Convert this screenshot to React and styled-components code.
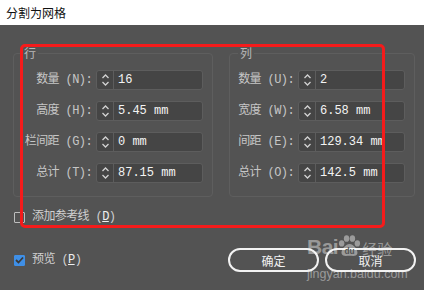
import React from 'react';
import styled, {createGlobalStyle} from 'styled-components';

const GlobalStyle = createGlobalStyle`
  html, body {
    margin: 0;
    padding: 0;
    background: #535353;
  }
  body {
    font-family: "Noto Sans CJK SC", "Liberation Sans", sans-serif;
  }
`;

// SimSun-like look: half-width ascii next to full-width hanzi
const labelFont = `"Liberation Mono", "Noto Sans CJK SC", monospace`;

const Dialog = styled.div`
  position: relative;
  width: 424px;
  height: 290px;
  overflow: hidden;
  display: flex;
  flex-direction: column;
  background: #535353;
`;

const TitleBar = styled.div`
  height: 25px;
  flex: none;
  background: #ffffff;
  color: #111;
  font-size: 12px;
  line-height: 25px;
  padding-left: 6px;
`;

const Body = styled.div`
  flex: 1;
  display: flex;
  flex-direction: column;
  padding: 21px 8px 0 13px;
`;

const Groups = styled.div`
  display: flex;
  gap: 16px;
`;

const Group = styled.fieldset`
  margin: 0;
  padding: 0 9px 13px 0;
  border: 1px solid #5e5e5e;
  border-radius: 4px;
  min-width: 0;
`;

const Legend = styled.legend`
  margin-left: 8px;
  padding: 0 2px;
  font-size: 12px;
  line-height: 14px;
  color: #b8b8b8;
`;

const Rows = styled.div`
  display: grid;
  grid-template-columns: ${p => p.$labelWidth}px 107px;
  column-gap: 4px;
  row-gap: 11px;
  padding-top: 10px;
`;

const Label = styled.label`
  font-family: ${labelFont};
  font-size: 12px;
  letter-spacing: -0.6px;
  line-height: 20px;
  color: #c6c6c6;
  text-align: right;
  white-space: nowrap;
`;

const Field = styled.div`
  display: flex;
  height: 20px;
  box-sizing: border-box;
  border: 1px solid #5d5d5d;
  border-radius: 3px;
  background: #454545;
  overflow: hidden;
`;

const Spinner = styled.div`
  width: 16px;
  flex: none;
  border-right: 1px solid #5d5d5d;
  display: flex;
  align-items: center;
  justify-content: center;
`;

const Value = styled.div`
  flex: 1;
  padding-left: 4px;
  font-family: "Liberation Mono", "DejaVu Sans Mono", monospace;
  font-size: 12px;
  line-height: 18px;
  color: #f4f4f4;
  white-space: nowrap;
`;

const CheckRow = styled.div`
  display: flex;
  align-items: center;
  gap: 7px;
  margin-left: 1px;
  margin-top: ${p => p.$top || 0}px;
  font-family: ${labelFont};
  font-size: 12px;
  letter-spacing: -0.6px;
  line-height: 14px;
  color: #d0d0d0;
`;

const Box = styled.span`
  width: 11px;
  height: 11px;
  box-sizing: border-box;
  border-radius: 1px;
  border: 1px solid ${p => (p.$checked ? '#3f8fe6' : '#bdbdbd')};
  background: ${p => (p.$checked ? '#3f8fe6' : 'transparent')};
  display: flex;
  align-items: center;
  justify-content: center;
`;

const Key = styled.span`
  text-decoration: underline;
  color: #f0f0f0;
`;

const Footer = styled.div`
  display: flex;
  align-items: center;
  justify-content: space-between;
  margin-top: 24px;
`;

const Buttons = styled.div`
  display: flex;
  gap: 6px;
`;

const Button = styled.button`
  width: 91px;
  height: 24px;
  box-sizing: border-box;
  border: 2px solid #f2f2f2;
  border-radius: 12px;
  background: transparent;
  color: #f2f2f2;
  font-family: "Noto Sans CJK SC", sans-serif;
  font-size: 12px;
  padding: 0;
`;

const Highlight = styled.div`
  position: absolute;
  left: 20px;
  top: 44px;
  width: 365px;
  height: 184px;
  box-sizing: border-box;
  border: 3px solid #f51b1b;
  border-radius: 5px;
  pointer-events: none;
`;

const Watermark = styled.div`
  position: absolute;
  left: 307px;
  top: 235px;
  display: flex;
  flex-direction: column;
  color: rgba(255, 255, 255, 0.42);
  pointer-events: none;
`;

const Brand = styled.div`
  display: flex;
  align-items: flex-end;
  height: 22px;
`;

const Bai = styled.span`
  font-family: "Liberation Sans", sans-serif;
  font-weight: bold;
  font-size: 21px;
  line-height: 20px;
  letter-spacing: -0.5px;
`;

const Jy = styled.span`
  font-size: 15px;
  line-height: 17px;
  margin-left: 1px;
`;

const Url = styled.span`
  margin-top: 11px;
  font-family: "Liberation Sans", sans-serif;
  font-size: 12.5px;
  line-height: 13px;
`;

const Chevrons = () => (
  <svg width="9" height="14" viewBox="0 0 9 14" fill="none" stroke="#d2d2d2" strokeWidth="1.3">
    <path d="M1.5 5 L4.5 2 L7.5 5"/>
    <path d="M1.5 9 L4.5 12 L7.5 9"/>
  </svg>
);

const Paw = () => (
  <svg width="23" height="22" viewBox="0 0 22 21" fill="rgba(255,255,255,0.42)">
    <ellipse cx="3.5" cy="8" rx="2.6" ry="3"/>
    <ellipse cx="8.2" cy="3.3" rx="2.6" ry="3.2"/>
    <ellipse cx="13.8" cy="3.3" rx="2.6" ry="3.2"/>
    <ellipse cx="18.5" cy="8" rx="2.6" ry="3"/>
    <path d="M11 8.5 C7 8.5 2.5 14.5 3.5 18 C4.5 21 9 19.8 11 19.8 C13 19.8 17.5 21 18.5 18 C19.5 14.5 15 8.5 11 8.5 Z"/>
    <text x="11" y="18.5" textAnchor="middle" fontFamily="Liberation Sans" fontWeight="bold" fontSize="8" fill="#535353">du</text>
  </svg>
);

const rows = [
  [
    ['数量 (N):', '16'],
    ['高度 (H):', '5.45 mm'],
    ['栏间距 (G):', '0 mm'],
    ['总计 (T):', '87.15 mm'],
  ],
  [
    ['数量 (U):', '2'],
    ['宽度 (W):', '6.58 mm'],
    ['间距 (E):', '129.34 mm'],
    ['总计 (O):', '142.5 mm'],
  ],
];

const SpinGroup = ({title, labelWidth, items}) => (
  <Group>
    <Legend>{title}</Legend>
    <Rows $labelWidth={labelWidth}>
      {items.map(([label, value]) => (
        <React.Fragment key={label}>
          <Label>{label}</Label>
          <Field>
            <Spinner><Chevrons/></Spinner>
            <Value>{value}</Value>
          </Field>
        </React.Fragment>
      ))}
    </Rows>
  </Group>
);

export default function App() {
  return (
    <Dialog>
      <GlobalStyle/>
      <TitleBar>分割为网格</TitleBar>
      <Body>
        <Groups>
          <SpinGroup title="行" labelWidth={78} items={rows[0]}/>
          <SpinGroup title="列" labelWidth={64} items={rows[1]}/>
        </Groups>
        <CheckRow $top={13}>
          <Box/>
          <span>添加参考线 (<Key>D</Key>)</span>
        </CheckRow>
        <Footer>
          <CheckRow>
            <Box $checked>
              <svg width="9" height="8" viewBox="0 0 9 8" fill="none" stroke="#3a3a3a" strokeWidth="1.8">
                <path d="M1 4 L3.5 6.5 L8 1.5"/>
              </svg>
            </Box>
            <span>预览 (<Key>P</Key>)</span>
          </CheckRow>
          <Buttons>
            <Button>确定</Button>
            <Button>取消</Button>
          </Buttons>
        </Footer>
      </Body>
      <Highlight/>
      <Watermark>
        <Brand>
          <Bai>Bai</Bai>
          <Paw/>
          <Jy>经验</Jy>
        </Brand>
        <Url>jingyan.baidu.com</Url>
      </Watermark>
    </Dialog>
  );
}
